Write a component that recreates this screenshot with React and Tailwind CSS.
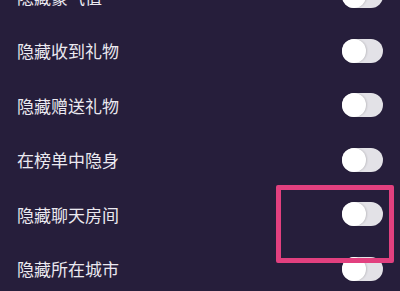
const rows = [
  '隐藏豪气值',
  '隐藏收到礼物',
  '隐藏赠送礼物',
  '在榜单中隐身',
  '隐藏聊天房间',
  '隐藏所在城市',
]

function Toggle() {
  return (
    <div className="w-[41px] h-[24px] rounded-full bg-[#e3e2e7] flex items-center">
      <span className="w-[24px] h-[24px] rounded-full bg-white shadow-[1px_0_2px_rgba(0,0,0,0.15)]" />
    </div>
  )
}

export default function App() {
  return (
    <div
      className="relative w-[400px] h-[291px] overflow-hidden bg-[#261e3b]"
      style={{ fontFamily: '"Noto Sans CJK SC", "Noto Sans", sans-serif' }}
    >
      <div className="mt-[-31px] flex flex-col">
        {rows.map((label, i) => (
          <div key={i} className="h-[54.5px] flex items-center justify-between pl-[17px] pr-[17px]">
            <span className="text-[17px] text-[#ebe9f0] tracking-[0px]">{label}</span>
            <Toggle />
          </div>
        ))}
      </div>
      <div className="absolute left-[276px] top-[185px] w-[118px] h-[78px] border-[5px] border-[#e2407f] rounded-[2px]" />
    </div>
  )
}
